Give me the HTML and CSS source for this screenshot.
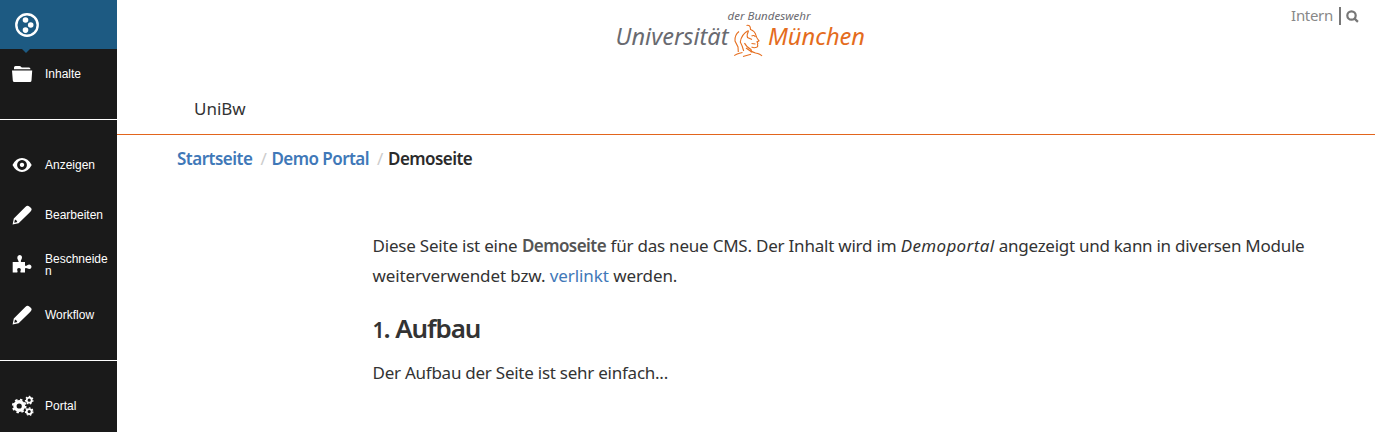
FILE: index.html
```html
<!DOCTYPE html>
<html lang="de">
<head>
<meta charset="utf-8">
<title>Demoseite</title>
<link rel="stylesheet" href="styles.css">
</head>
<body>
<div class="app">
  <nav class="toolbar">
    <div class="brand">
      <svg class="plone" viewBox="0 0 24 24"><circle cx="12" cy="12" r="10.7" fill="none" stroke="#fff" stroke-width="2.4"/><circle cx="10.5" cy="7" r="2.8"/><circle cx="15.7" cy="12" r="2.8"/><circle cx="10.5" cy="17.1" r="2.8"/></svg>
    </div>
    <ul class="group first">
      <li><svg class="icon" viewBox="0 0 22 22"><path d="M3 5.7V4.5Q3 3 4.500 3H8.500Q9.500 3 10.200 3.900L10.800 4.500H18Q19.500 4.500 19.500 6.300H3ZM1 7.500H21.200L20.500 17.500Q20.400 19 19 19H3.300Q2 19 1.800 17.500Z"/></svg><span>Inhalte</span></li>
    </ul>
    <ul class="group middle">
      <li><svg class="icon" viewBox="0 0 22 22"><path fill-rule="evenodd" d="M1.500 11Q5 4 11 4T20.700 11Q17 18 11 18T1.500 11ZM11 6.100a4.900 4.900 0 1 0 .01 0ZM11 8.700a2.200 2.200 0 1 1-.01 0Z"/></svg><span>Anzeigen</span></li>
      <li><svg class="icon" viewBox="0 0 22 22"><path fill-rule="evenodd" d="M1.600 20.500 2.800 14.400 14.300 2.900Q16.200 1.300 17.500 2Q20.900 4 20.600 5.700Q20.200 6.700 18.900 8.200L7.600 19.200ZM4 15.600 3.200 18.800 6.300 17.900Q6 16.200 4 15.600Z"/></svg><span>Bearbeiten</span></li>
      <li><svg class="icon" viewBox="0 0 22 22"><path d="M1.700 8H7.500Q8 7.400 7.200 6.400Q5.700 4.200 6.500 2.500Q7.300 1 8.500 1Q11 1 11 3.500Q11 4.700 10 6.300Q9.400 7.500 10.200 8H14V11.200Q14.500 12.500 16.200 11.300Q18.200 10 19.600 11Q20.600 11.900 20.500 13Q20.300 14.800 18.500 15Q17.400 15 16 14.200Q14.500 13.500 14 14.500V18.500H9.600Q9 17.800 9.700 16.500Q10.300 14.300 8 14.100Q5.600 14.300 6.300 16.500Q7 17.900 6.200 18.500H1.700Z"/></svg><span>Beschneiden</span></li>
      <li><svg class="icon" viewBox="0 0 22 22"><path fill-rule="evenodd" d="M1.600 20.500 2.800 14.400 14.300 2.900Q16.200 1.300 17.500 2Q20.900 4 20.600 5.700Q20.200 6.700 18.900 8.200L7.600 19.200ZM4 15.600 3.200 18.800 6.300 17.900Q6 16.200 4 15.600Z"/></svg><span>Workflow</span></li>
    </ul>
    <ul class="group last">
      <li><svg class="icon gears" viewBox="0 0 22 22"><g fill="none" stroke="#fff"><circle cx="8.200" cy="11" r="4.300" stroke-width="3.400"/><circle cx="8.200" cy="11" r="6.400" stroke-width="1.800" stroke-dasharray="2.513 2.513"/><circle cx="18.200" cy="5.200" r="2.500" stroke-width="1.800"/><circle cx="18.200" cy="5.200" r="3.700" stroke-width="1.300" stroke-dasharray="1.660 1.660"/><circle cx="18.200" cy="16.600" r="2.500" stroke-width="1.800"/><circle cx="18.200" cy="16.600" r="3.700" stroke-width="1.300" stroke-dasharray="1.660 1.660"/></g></svg><span>Portal</span></li>
    </ul>
  </nav>
  <div class="page">
    <header class="header">
      <svg class="logo" viewBox="0 0 256 60">
        <text class="logo-small" x="114.500" y="20" textLength="83" lengthAdjust="spacingAndGlyphs">der Bundeswehr</text>
        <text class="logo-grey" x="2.500" y="45" textLength="113" lengthAdjust="spacingAndGlyphs">Universität</text>
        <text class="logo-orange" x="155" y="45" textLength="97" lengthAdjust="spacingAndGlyphs">München</text>
        <g class="head"><path d="M133.500 25.500Q137.500 24.400 137.500 29.500Q142 31 143 35.500Q143.500 38 146 40.800L144 41.900Q145.500 43.500 144.500 44.700Q145.300 46.500 143.500 47.300Q141 48.300 138.500 47"/><path d="M135.500 30.500Q128.500 34 127.300 42Q129.500 46 130.700 51"/><path d="M126 31.500Q121.500 35 122 41L125 47L125.300 52"/><path d="M135.500 31Q133.500 35 134.500 37.500L139 39.500M138.500 36Q141 34.500 142.500 37"/><path d="M138.500 43.500 142.500 44M131.500 43Q133 46.500 138 49.500Q138.500 51 138.300 52.500"/><path d="M121.300 55.700Q123 53.800 129.500 52.500M133 48Q137 51.500 142.500 53Q147.500 54 149 56M130 56.500 138 54.300"/></g>
      </svg>
      <div class="tools"><span class="intern">Intern</span><i class="bar"></i><svg class="search" viewBox="0 0 13 13"><circle cx="5.500" cy="5.500" r="4.200"/><path d="m8.600 8.600 3.300 3.300"/></svg></div>
    </header>
    <nav class="mainnav"><span class="unibw">UniBw</span></nav>
    <nav class="crumbs"><a class="c1">Startseite</a><span class="slash">/</span><a class="c2">Demo Portal</a><span class="slash">/</span><span class="c3">Demoseite</span></nav>
    <main class="content">
      <p><span class="a">Diese Seite ist eine</span> <strong>Demoseite</strong> <span class="b">für das neue CMS. Der Inhalt wird im</span> <em>Demoportal</em> <span class="c">angezeigt und kann in diversen Module</span><br><span class="d">weiterverwendet bzw.</span> <a class="link">verlinkt</a> <span class="e">werden.</span></p>
      <h2><span class="num">1</span>. Aufbau</h2>
      <p class="f">Der Aufbau der Seite ist sehr einfach...</p>
    </main>
  </div>
</div>
</body>
</html>
```
FILE: styles.css
```css
* { box-sizing: border-box; }
body { margin: 0; overflow: hidden; background: #fff; color: #333; font-family: "Noto Sans", sans-serif; font-size: 17px; }
.app { display: flex; height: 432px; }
.toolbar { width: 117px; flex: none; background: #1a1a1a; color: #fff; font: 12px/12px "Liberation Sans", sans-serif; }
.brand { position: relative; height: 49px; padding: 13px 15px; background: #1d5a82; }
.brand::after { content: ""; position: absolute; left: 22px; top: 49px; border: 4px solid transparent; border-top-color: #1d5a82; border-bottom: 0; }
.plone { display: block; width: 24px; height: 24px; fill: #fff; }
.group { list-style: none; margin: 0; padding: 0; }
.group li { display: flex; align-items: center; height: 50px; padding-left: 11px; }
.group span { width: 64px; margin-left: 12px; overflow-wrap: anywhere; }
.first { height: 71px; border-bottom: 1px solid #fff; }
.middle { height: 241px; padding-top: 20px; border-bottom: 1px solid #fff; }
.last { padding-top: 20px; }
.icon { width: 22px; height: 22px; flex: none; fill: #fff; }
.gears { overflow: visible; }
.page { flex: 1; min-width: 0; }
.header { display: flex; justify-content: space-between; height: 84px; padding: 0 16px 0 496px; }
.logo { width: 256px; height: 60px; font-style: italic; }
.logo-small { font-size: 10.5px; fill: #6a6a70; }
.logo-grey { font-size: 23.5px; fill: #696a70; }
.logo-orange { font-size: 23.5px; fill: #e46c1d; }
.head { fill: none; stroke: #e66f20; stroke-width: 1.1; }
.tools { display: flex; align-items: center; height: 32px; color: #888; font-size: 15px; }
.intern { margin-top: -2px; letter-spacing: -.3px; }
.bar { width: 1.5px; height: 18px; margin: 0 5.5px 0 6px; background: #777; }
.search { width: 13px; height: 13px; fill: none; stroke: #777; stroke-width: 2.2; }
.mainnav { height: 51px; padding-left: 77px; line-height: 50px; border-bottom: 1px solid #e2651d; }
.crumbs { display: flex; height: 47px; padding-left: 60px; line-height: 47px; font-weight: 600; }
.crumbs a, .link { color: #4078b8; }
.c1 { letter-spacing: -.5px; }
.c2 { letter-spacing: -.55px; }
.c3 { color: #2b2b2b; letter-spacing: -.55px; }
.slash { color: #ccc; font-weight: 400; width: 19px; padding-left: 8px; }
.content { padding: 49px 0 0 255.5px; white-space: nowrap; }
p { margin: 0; line-height: 30px; }
strong { color: #555; font-weight: 600; letter-spacing: -.55px; }
em { letter-spacing: .35px; }
.a { letter-spacing: -.21px; }
.b { letter-spacing: -.22px; }
.c { letter-spacing: -.27px; }
.f { letter-spacing: -.25px; }
.d, .e, .link { letter-spacing: -.1px; }
h2 { margin: 19px 0 10px; font-size: 26px; line-height: 36px; font-weight: 600; letter-spacing: -1.1px; }
.num { font-size: 21px; }
```
